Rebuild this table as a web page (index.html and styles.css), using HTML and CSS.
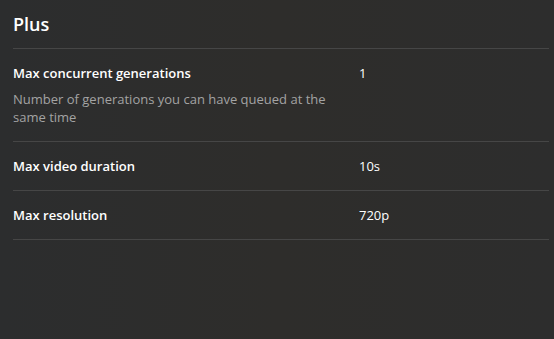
FILE: index.html
```html
<!DOCTYPE html>
<html lang="en">
<head>
    <meta charset="UTF-8">
    <meta name="viewport" content="width=device-width, initial-scale=1.0">
    <title>Plan limits</title>
    <link rel="stylesheet" href="styles.css">
</head>
<body>

    <section class="plan">
        <h2 class="plan-title">Plus</h2>

        <div class="limit">
            <div class="limit-info">
                <div class="limit-name">Max concurrent generations</div>
                <p class="limit-desc">Number of generations you can have queued at the same time</p>
            </div>
            <div class="limit-value">1</div>
        </div>

        <div class="limit">
            <div class="limit-info">
                <div class="limit-name">Max video duration</div>
            </div>
            <div class="limit-value">10s</div>
        </div>

        <div class="limit">
            <div class="limit-info">
                <div class="limit-name">Max resolution</div>
            </div>
            <div class="limit-value">720p</div>
        </div>
    </section>

</body>
</html>
```

FILE: styles.css
```css
body {
    font-family: 'Open Sans', 'Noto Sans', sans-serif;
    margin: 0;
    min-height: 100vh;
    background: linear-gradient(90deg, #2c2d2e 0%, #2e2d2b 50%, #2d2d2d 100%);
    color: #fff;
}

.plan {
    padding: 12px 5px 0 13px;
}

.plan-title {
    margin: 0;
    font-size: 18px;
    font-weight: 600;
    line-height: 24px;
    padding-bottom: 12px;
    border-bottom: 1px solid #464646;
}

.limit {
    display: grid;
    grid-template-columns: 346px 1fr;
    padding: 16px 0 15px;
    border-bottom: 1px solid #464646;
}

.limit-name {
    font-size: 13px;
    font-weight: 600;
    line-height: 17px;
}

.limit-desc {
    margin: 8px 0 0;
    width: 330px;
    font-size: 13px;
    line-height: 18px;
    color: #a3a3a3;
}

.limit-value {
    font-size: 13px;
    line-height: 17px;
}
```
